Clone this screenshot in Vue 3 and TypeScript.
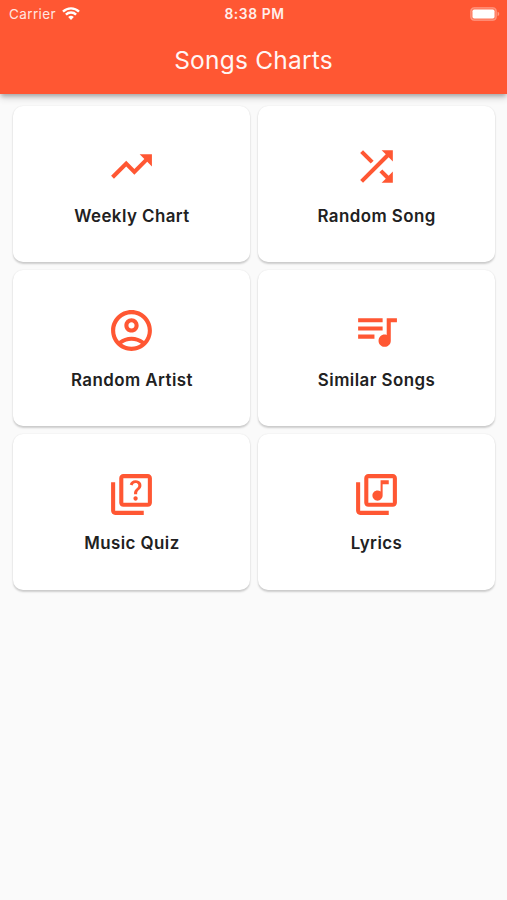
<script setup lang="ts">
interface Tile {
  label: string
  paths: string[]
}

const stack = [
  'M4 6H2v14c0 1.1.9 2 2 2h14v-2H4V6z',
  'M20 2H8c-1.1 0-2 .9-2 2v12c0 1.1.9 2 2 2h12c1.1 0 2-.9 2-2V4c0-1.1-.9-2-2-2zm0 14H8V4h12v12z',
]

const tiles: Tile[] = [
  {
    label: 'Weekly Chart',
    paths: ['M16 6l2.29 2.29-4.88 4.88-4-4L2 16.59 3.41 18l6-6 4 4 6.3-6.29L22 12V6z'],
  },
  {
    label: 'Random Song',
    paths: [
      'M10.59 9.17L5.41 4 4 5.41l5.17 5.17 1.42-1.41zM14.5 4l2.04 2.04L4 18.59 5.41 20 17.96 7.46 20 9.5V4h-5.5zm.33 9.41l-1.41 1.41 3.13 3.13L14.5 20H20v-5.5l-2.04 2.04-3.13-3.13z',
    ],
  },
  {
    label: 'Random Artist',
    paths: [
      'M12 2C6.48 2 2 6.48 2 12s4.48 10 10 10 10-4.48 10-10S17.52 2 12 2zM7.35 18.5C8.66 17.56 10.26 17 12 17s3.34.56 4.65 1.5c-1.31.94-2.91 1.5-4.65 1.5s-3.34-.56-4.65-1.5zm10.79-1.38C16.45 15.8 14.32 15 12 15s-4.45.8-6.14 2.12C4.7 15.73 4 13.95 4 12c0-4.42 3.58-8 8-8s8 3.58 8 8c0 1.95-.7 3.73-1.86 5.12z',
      'M12 6c-1.93 0-3.5 1.57-3.5 3.5S10.07 13 12 13s3.5-1.57 3.5-3.5S13.93 6 12 6zm0 5c-.83 0-1.5-.67-1.5-1.5S11.17 8 12 8s1.5.67 1.5 1.5S12.83 11 12 11z',
    ],
  },
  {
    label: 'Similar Songs',
    paths: [
      'M15 6H3v2h12V6zm0 4H3v2h12v-2zM3 16h8v-2H3v2zM17 6v8.18c-.31-.11-.65-.18-1-.18-1.66 0-3 1.34-3 3s1.34 3 3 3 3-1.34 3-3V8h3V6h-5z',
    ],
  },
  {
    label: 'Music Quiz',
    paths: [
      ...stack,
      'M13.51 10.16c.41-.73 1.18-1.16 1.63-1.8.48-.68.21-1.94-1.14-1.94-.88 0-1.32.67-1.5 1.23l-1.37-.57C11.51 5.96 12.52 5 13.99 5c1.23 0 2.08.56 2.51 1.26.37.6.58 1.73.01 2.57-.63.93-1.23 1.21-1.56 1.81-.13.24-.18.4-.18 1.18h-1.52c.01-.41-.06-1.08.26-1.66zm-.56 3.79c0-.59.47-1.04 1.05-1.04.59 0 1.04.45 1.04 1.04 0 .58-.44 1.05-1.04 1.05-.58 0-1.05-.47-1.05-1.05z',
    ],
  },
  {
    label: 'Lyrics',
    paths: [
      ...stack,
      'M12.5 15c1.38 0 2.5-1.12 2.5-2.5V7h3V5h-4v5.51c-.42-.32-.93-.51-1.5-.51-1.38 0-2.5 1.12-2.5 2.5s1.12 2.5 2.5 2.5z',
    ],
  },
]
</script>

<template>
  <div class="screen">
    <header class="app-bar">
      <div class="status">
        <div class="network">
          <span class="carrier">Carrier</span>
          <svg class="wifi" viewBox="0 0 18 13" aria-hidden="true">
            <path d="M1 4.7a11.4 11.4 0 0 1 16 0" />
            <path d="M3.9 7.6a7.3 7.3 0 0 1 10.2 0" />
            <path class="dot" d="M9 12.9L6.2 10.1a4 4 0 0 1 5.6 0z" />
          </svg>
        </div>
        <span class="time">8:38 PM</span>
        <div class="power">
          <svg class="battery" viewBox="0 0 30 14" aria-hidden="true">
            <rect class="shell" x="0.7" y="0.7" width="25.6" height="12.6" rx="3.6" />
            <rect class="charge" x="2.5" y="2.5" width="22" height="9" rx="1.8" />
            <path class="cap" d="M27.6 4.8v4.4q1.7-.6 1.7-2.2t-1.7-2.2z" />
          </svg>
        </div>
      </div>
      <h1 class="title">Songs Charts</h1>
    </header>
    <main class="grid">
      <button v-for="tile in tiles" :key="tile.label" class="card" type="button">
        <svg class="icon" viewBox="0 0 24 24" aria-hidden="true">
          <path v-for="(d, i) in tile.paths" :key="i" :d="d" />
        </svg>
        <span class="label">{{ tile.label }}</span>
      </button>
    </main>
  </div>
</template>

<style>
body {
  background: #fafafa;
}
</style>

<style scoped>
.screen {
  min-height: 900px;
  background: #fafafa;
  font-family: Inter, "Liberation Sans", sans-serif;
}

.app-bar {
  position: relative;
  box-sizing: border-box;
  height: 94px;
  background: #ff5733;
  color: #fff;
  box-shadow: 0 3px 4px -1px rgba(0, 0, 0, 0.22), 0 4px 7px rgba(0, 0, 0, 0.16);
}

.status {
  display: grid;
  grid-template-columns: 1fr auto 1fr;
  align-items: center;
  height: 27px;
  padding: 0 7px 0 9px;
}

.network {
  display: flex;
  align-items: center;
  gap: 6.4px;
}

.carrier {
  font-size: 13.5px;
  letter-spacing: 0.38px;
  opacity: 0.85;
}

.wifi {
  width: 18px;
  height: 13px;
  margin-top: -1px;
  fill: none;
  stroke: #fff;
  stroke-width: 2.4;
}

.wifi .dot {
  fill: #fff;
  stroke: none;
}

.time {
  font-size: 13.8px;
  font-weight: 600;
  letter-spacing: 0.6px;
  opacity: 0.9;
}

.power {
  display: flex;
  justify-content: flex-end;
}

.battery {
  width: 30px;
  height: 14px;
}

.shell {
  fill: rgba(255, 255, 255, 0.2);
  stroke: rgba(255, 255, 255, 0.28);
  stroke-width: 1.3;
}

.charge {
  fill: #fff;
}

.cap {
  fill: rgba(255, 255, 255, 0.4);
}

.title {
  margin: 17px 0 0;
  font-size: 24.5px;
  font-weight: 400;
  line-height: 32px;
  letter-spacing: 0.2px;
  text-align: center;
  opacity: 0.95;
}

.grid {
  display: grid;
  grid-template-columns: 1fr 1fr;
  grid-auto-rows: 156px;
  gap: 7.8px;
  padding: 12.3px 12.5px 12px 13px;
}

.card {
  display: flex;
  flex-direction: column;
  align-items: center;
  margin: 0;
  padding: 36px 0 0;
  border: 0;
  border-radius: 10px;
  background: #fff;
  color: #212121;
  font-family: inherit;
  box-shadow: 0 1.5px 2px rgba(0, 0, 0, 0.18), 0 0 2px rgba(0, 0, 0, 0.05);
}

.icon {
  width: 49px;
  height: 49px;
  fill: #ff5733;
}

.label {
  margin-top: 14.5px;
  padding-left: 1px;
  font-size: 16.9px;
  font-weight: 600;
  line-height: 20px;
  letter-spacing: 0.45px;
}
</style>
